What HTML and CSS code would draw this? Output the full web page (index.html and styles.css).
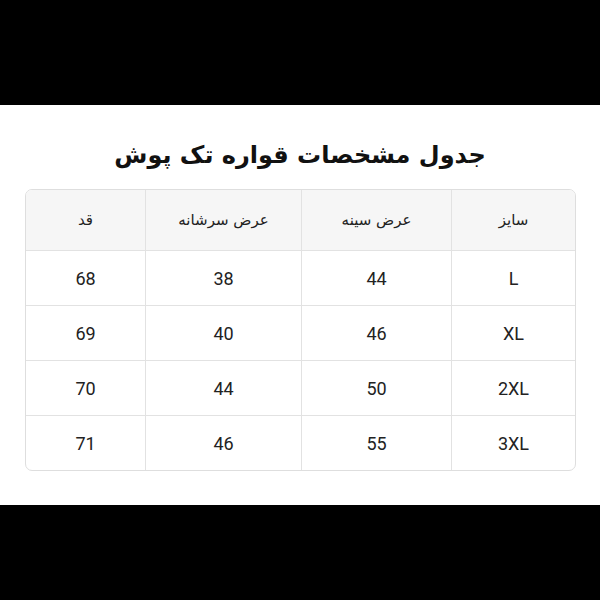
FILE: index.html
```html
<!DOCTYPE html>
<html lang="fa" dir="rtl">
<head>
<meta charset="utf-8">
<title>جدول مشخصات قواره تک پوش</title>
<link rel="stylesheet" href="styles.css">
</head>
<body>
<div class="bar bar-top"></div>
<main class="sheet">
  <h1 class="title">جدول مشخصات قواره تک پوش</h1>
  <div class="table-wrap">
    <table class="size-table">
      <colgroup>
        <col class="c1"><col class="c2"><col class="c3"><col class="c4">
      </colgroup>
      <thead>
        <tr><th>سایز</th><th>عرض سینه</th><th>عرض سرشانه</th><th>قد</th></tr>
      </thead>
      <tbody>
        <tr><td>L</td><td>44</td><td>38</td><td>68</td></tr>
        <tr><td>XL</td><td>46</td><td>40</td><td>69</td></tr>
        <tr><td>2XL</td><td>50</td><td>44</td><td>70</td></tr>
        <tr><td>3XL</td><td>55</td><td>46</td><td>71</td></tr>
      </tbody>
    </table>
  </div>
</main>
<div class="bar bar-bottom"></div>
</body>
</html>
```
FILE: styles.css
```css
html, body {
  margin: 0;
  padding: 0;
  background: #000;
}
body {
  width: 600px;
  height: 600px;
  display: flex;
  flex-direction: column;
  font-family: Roboto, "DejaVu Sans", sans-serif;
  color: #222;
}
.bar-top { height: 105px; background: #000; }
.bar-bottom { flex: 1; background: #000; }
.sheet {
  height: 400px;
  background: #fff;
  display: flex;
  flex-direction: column;
  align-items: center;
}
.title {
  margin: 30px 0 0;
  height: 54px;
  line-height: 40px;
  font-size: 24px;
  font-weight: bold;
  color: #111;
  font-family: "DejaVu Sans", sans-serif;
}
.table-wrap {
  width: 549px;
  margin-right: 24px;
  margin-left: 27px;
  align-self: flex-start;
}
.size-table {
  width: 549px;
  border-collapse: separate;
  border-spacing: 0;
  border: 1px solid #dedede;
  border-radius: 7px;
  overflow: hidden;
  table-layout: fixed;
}
.c1 { width: 124px; }
.c2 { width: 150px; }
.c3 { width: 156px; }
.c4 { width: 119px; }
.size-table th,
.size-table td {
  text-align: center;
  padding: 0;
  border-left: 1px solid #e2e2e2;
  border-bottom: 1px solid #e2e2e2;
}
.size-table th:last-child,
.size-table td:last-child { border-left: none; }
.size-table tbody tr:last-child td { border-bottom: none; }
.size-table th {
  height: 60px;
  background: #f6f6f6;
  font-weight: normal;
  font-size: 15px;
  font-family: "DejaVu Sans", sans-serif;
  color: #222;
}
.size-table td {
  height: 54px;
  font-size: 18px;
  color: #222;
}
```
